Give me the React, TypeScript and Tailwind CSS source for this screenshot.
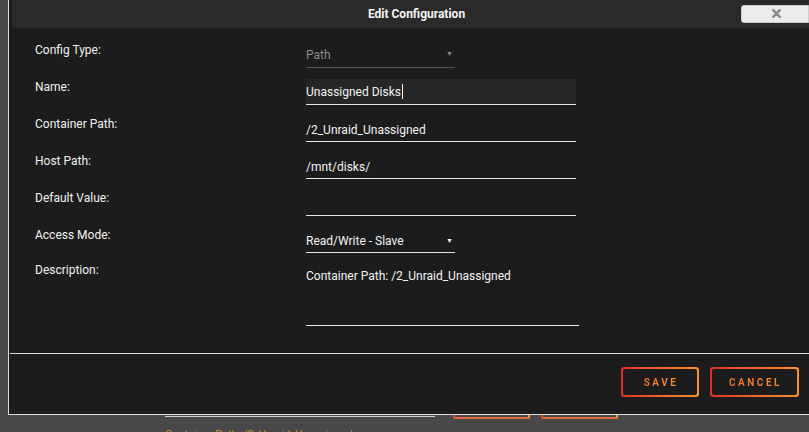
import React from "react";

type RowProps = {
  label: string;
  children: React.ReactNode;
};

const Row = ({ label, children }: RowProps) => {
  return (
    <div className="flex h-[37px] items-start">
      <div className="w-[271px] shrink-0 pt-[11px] leading-[16px] text-[#f0f0f0]">{label}</div>
      <div className="flex h-full items-end">{children}</div>
    </div>
  );
};

const Arrow = ({ muted }: { muted?: boolean }) => (
  <span className={`mr-[2px] text-[7px] leading-none ${muted ? "text-[#8a8a8a]" : "text-[#f0f0f0]"}`}>▼</span>
);

const OutlineButton = ({ text, width }: { text: string; width: string }) => (
  <div className={`${width} h-[30px] rounded-[3px] bg-gradient-to-r from-[#e22a2a] to-[#f7902f] p-[2px]`}>
    <div className="flex h-full w-full items-center justify-center rounded-[2px] bg-[#1c1c1c]">
      <span className="bg-gradient-to-r from-[#f06a2c] to-[#f7902f] bg-clip-text pl-[2px] text-[10px] font-bold tracking-[2.5px] text-transparent">
        {text}
      </span>
    </div>
  </div>
);

export default function App() {
  return (
    <div
      className="h-[432px] w-[809px] overflow-hidden bg-[#484848] text-[12px]"
      style={{ fontFamily: "Roboto, 'Liberation Sans', sans-serif" }}
    >
      {/* dialog */}
      <div className="ml-[8px] flex h-[415px] flex-col border-b border-l border-[#dcdcdc] bg-[#1c1c1c]">
        {/* title bar */}
        <div className="ml-[3px] flex h-[28px] shrink-0 items-center rounded-bl-[4px] bg-[#2a2a2a]">
          <div className="flex-1 pl-[80px] text-center font-bold text-[#f5f5f5]">Edit Configuration</div>
          <div className="mb-[1px] flex h-[18px] w-[68px] items-center justify-center rounded-l-[3px] border border-[#cfcfcf] bg-[#ebebeb]">
            <svg width="9" height="9" viewBox="0 0 9 9" className="ml-[2px]">
              <path d="M1.2 1.2 L7.8 7.8 M7.8 1.2 L1.2 7.8" stroke="#8a8a8a" strokeWidth="2.4" strokeLinecap="round" />
            </svg>
          </div>
        </div>

        {/* form */}
        <div className="mt-[3px] pl-[26px]">
          <Row label="Config Type:">
            <div className="flex h-[26px] w-[149px] items-center justify-between border-b border-[#555555] text-[#8a8a8a]">
              <span>Path</span>
              <Arrow muted />
            </div>
          </Row>
          <Row label="Name:">
            <div className="flex h-[26px] w-[270px] items-center border-b border-[#e6e6e6] bg-[#262626] text-[#f2f2f2]">
              <span>Unassigned Disks</span>
              <span className="ml-[1px] h-[15px] w-[1px] bg-[#f2f2f2]" />
            </div>
          </Row>
          <Row label="Container Path:">
            <div className="flex h-[26px] w-[270px] items-center border-b border-[#e6e6e6] pt-[3px] text-[#f2f2f2]">
              /2_Unraid_Unassigned
            </div>
          </Row>
          <Row label="Host Path:">
            <div className="flex h-[26px] w-[270px] items-center border-b border-[#e6e6e6] pt-[3px] text-[#f2f2f2]">
              /mnt/disks/
            </div>
          </Row>
          <Row label="Default Value:">
            <div className="h-[26px] w-[270px] border-b border-[#e6e6e6]" />
          </Row>
          <Row label="Access Mode:">
            <div className="flex h-[26px] w-[149px] items-center justify-between border-b border-[#e6e6e6] pt-[3px] text-[#f2f2f2]">
              <span>Read/Write - Slave</span>
              <Arrow />
            </div>
          </Row>
          <div className="flex items-start">
            <div className="w-[271px] shrink-0 pt-[9px] leading-[16px] text-[#f0f0f0]">Description:</div>
            <div className="mt-[10px] h-[63px] w-[273px] border-b border-[#e6e6e6] pt-[5px] leading-[16px] text-[#f2f2f2]">
              Container Path: /2_Unraid_Unassigned
            </div>
          </div>
        </div>

        {/* separator */}
        <div className="ml-[1px] mt-[27px] h-[1px] bg-[#dcdcdc]" />

        {/* buttons */}
        <div className="mt-[13px] flex justify-end gap-[11px] pr-[10px]">
          <OutlineButton text="SAVE" width="w-[78px]" />
          <OutlineButton text="CANCEL" width="w-[89px]" />
        </div>
      </div>

      {/* page content peeking out beneath the dialog */}
      <div className="flex h-[4px] items-start">
        <div className="ml-[165px] mt-[1px] h-[1px] w-[270px] bg-[#cfcfcf]" />
        <div className="ml-[18px] h-[4px] w-[77px] rounded-b-[2px] border-x-2 border-b-2 border-b-[#e06a3a] [border-left-color:#e03a3a] [border-right-color:#f0902f]" />
        <div className="ml-[11px] h-[4px] w-[77px] rounded-b-[2px] border-x-2 border-b-2 border-b-[#e06a3a] [border-left-color:#e03a3a] [border-right-color:#f0902f]" />
      </div>
      <div className="ml-[165px] mt-[10px] text-[11px] leading-[12px] text-[#c8902f]">
        Container Path: /2_Unraid_Unassigned
      </div>
    </div>
  );
}
